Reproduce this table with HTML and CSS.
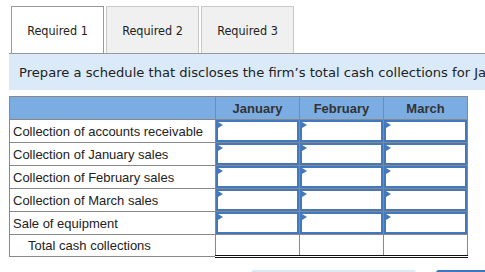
FILE: index.html
```html
<!DOCTYPE html>
<html>
<head>
<meta charset="utf-8">
<link rel="stylesheet" href="styles.css">
</head>
<body>
<div class="page">
  <div class="tabs">
    <div class="tab active">Required 1</div>
    <div class="tab">Required 2</div>
    <div class="tab">Required 3</div>
  </div>
  <div class="prompt">Prepare a schedule that discloses the firm’s total cash collections for January through March.</div>
  <table class="sched">
    <colgroup>
      <col class="c-label"><col class="c-num"><col class="c-num"><col class="c-num">
    </colgroup>
    <tr class="head">
      <th></th><th>January</th><th>February</th><th>March</th>
    </tr>
    <tr>
      <td class="lbl">Collection of accounts receivable</td>
      <td class="inp"><div class="box"></div></td><td class="inp"><div class="box"></div></td><td class="inp"><div class="box"></div></td>
    </tr>
    <tr>
      <td class="lbl">Collection of January sales</td>
      <td class="inp"><div class="box"></div></td><td class="inp"><div class="box"></div></td><td class="inp"><div class="box"></div></td>
    </tr>
    <tr>
      <td class="lbl">Collection of February sales</td>
      <td class="inp"><div class="box"></div></td><td class="inp"><div class="box"></div></td><td class="inp"><div class="box"></div></td>
    </tr>
    <tr>
      <td class="lbl">Collection of March sales</td>
      <td class="inp"><div class="box"></div></td><td class="inp"><div class="box"></div></td><td class="inp"><div class="box"></div></td>
    </tr>
    <tr>
      <td class="lbl">Sale of equipment</td>
      <td class="inp"><div class="box"></div></td><td class="inp"><div class="box"></div></td><td class="inp"><div class="box"></div></td>
    </tr>
    <tr class="total">
      <td class="lbl indent">Total cash collections</td>
      <td class="tot"></td><td class="tot"></td><td class="tot"></td>
    </tr>
  </table>
  <div class="footer">
    <div class="btn-light"></div>
    <div class="btn-dark"></div>
  </div>
</div>
</body>
</html>
```
FILE: styles.css
```css
html, body {
  margin: 0;
  padding: 0;
  background: #fff;
  overflow: hidden;
}
.page {
  width: 520px;
  padding: 6px 0 0 9px;
  font-family: "Liberation Sans", Arial, sans-serif;
}
.tabs {
  display: flex;
  gap: 2px;
  padding-left: 2px;
  border-bottom: 1px solid #999;
  height: 47px;
}
.tab {
  width: 93px;
  height: 47px;
  box-sizing: border-box;
  border: 1px solid #c8c8c8;
  border-bottom: none;
  background: #f0f0f0;
  font-family: "DejaVu Sans Condensed", "DejaVu Sans", sans-serif;
  font-size: 12.5px;
  color: #222;
  display: flex;
  align-items: center;
  justify-content: center;
  padding-top: 1px;
}
.tab.active {
  background: #fff;
  border-color: #999;
}
.prompt {
  background: #dbeaf8;
  height: 36px;
  line-height: 37px;
  padding-left: 10px;
  white-space: nowrap;
  overflow: hidden;
  font-family: "DejaVu Sans", Verdana, sans-serif;
  font-size: 13.1px;
  color: #222;
}
.sched {
  margin-top: 6px;
  border-collapse: collapse;
  table-layout: fixed;
  width: 458px;
  font-size: 13px;
  line-height: 15px;
  color: #222;
}
.c-label { width: 206px; }
.c-num { width: 84px; }
.sched th, .sched td {
  border: 1px solid #888;
  height: 22px;
  padding: 0;
}
.head th {
  background: #7badE3;
  font-weight: bold;
  text-align: center;
  color: #333;
}
.lbl {
  padding-left: 3px !important;
  white-space: nowrap;
}
.lbl.indent {
  padding-left: 18px !important;
}
.box {
  height: 18px;
  border: 2px solid #4478bd;
  background: #fff;
  position: relative;
}
.box::before {
  content: "";
  position: absolute;
  left: 0;
  top: 0;
  border-left: 5px solid #4478bd;
  border-top: 3px solid transparent;
  border-bottom: 3px solid transparent;
}
.total td {
  height: 20px;
}
.total .tot {
  border-top: 1px solid #111;
  border-bottom: 3px double #111;
}
.footer {
  display: flex;
  margin-top: 12px;
  padding-left: 242px;
  gap: 20px;
}
.btn-light {
  width: 165px;
  height: 10px;
  background: #dce8f5;
  border-radius: 3px 3px 0 0;
}
.btn-dark {
  width: 60px;
  height: 10px;
  background: #3d77bf;
  border-radius: 3px 3px 0 0;
}
```
